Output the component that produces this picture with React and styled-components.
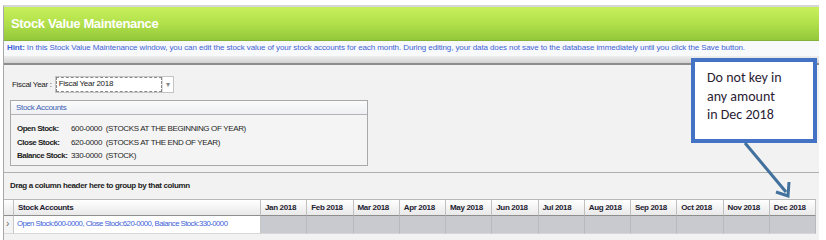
import React from 'react'
import styled, { createGlobalStyle } from 'styled-components'

const GlobalStyle = createGlobalStyle`
  body {
    margin: 0;
    background: #ffffff;
    font-family: 'Liberation Sans', Arial, sans-serif;
  }
`

const months = [
  'Jan', 'Feb', 'Mar', 'Apr', 'May', 'Jun',
  'Jul', 'Aug', 'Sep', 'Oct', 'Nov', 'Dec',
]

const Page = styled.div`
  position: relative;
  width: 826px;
  height: 240px;
  overflow: hidden;
  padding-top: 5px;
  box-sizing: border-box;
`

const Window = styled.div`
  margin-left: 3px;
  width: 815px;
  border-top: 2px solid #d6d6d6;
  border-left: 1px solid #a8a8a8;
  background: #f2f2f2;
  height: 240px;
  overflow: hidden;
`

const TitleBar = styled.div`
  height: 33px;
  display: flex;
  align-items: center;
  padding-left: 7px;
  background: linear-gradient(to bottom, #c8f05c 0%, #b4e24c 45%, #93c83a 100%);
  border-bottom: 1px solid #86b23a;
  color: #ffffff;
  font-size: 13px;
  font-weight: bold;
  letter-spacing: -0.35px;
`

const Hint = styled.div`
  height: 15px;
  line-height: 14px;
  padding-left: 3px;
  background: #f7f9fb;
  color: #3f63d6;
  font-size: 8px;
  letter-spacing: -0.1px;
  white-space: nowrap;
  b {
    font-weight: bold;
  }
`

const Strip = styled.div`
  height: 7px;
  background: linear-gradient(to bottom, #eeeeee, #d2d2d2);
  border-bottom: 2px solid #8c8c8c;
`

const Body = styled.div`
  padding: 10px 0 0 0;
`

const FiscalRow = styled.div`
  display: flex;
  align-items: center;
  padding-left: 8px;
  gap: 3px;
  font-size: 8px;
  letter-spacing: -0.3px;
  color: #222;
  height: 18px;
`

const Combo = styled.div`
  display: flex;
  width: 117px;
  height: 15px;
  border: 1px solid #c4c4c4;
  background: #fff;
`

const ComboText = styled.div`
  flex: 1;
  border: 1px dashed #888;
  padding-left: 2px;
  line-height: 12px;
`

const ComboButton = styled.div`
  width: 10px;
  display: flex;
  align-items: center;
  justify-content: center;
  color: #888;
  font-size: 8px;
  border-left: 1px solid #ddd;
`

const GroupBox = styled.div`
  margin: 7px 0 0 6px;
  width: 356px;
  height: 64px;
  border: 1px solid #a9a9a9;
  background: #f4f4f4;
`

const GroupHeader = styled.div`
  height: 13px;
  line-height: 13px;
  padding-left: 5px;
  font-size: 8px;
  letter-spacing: -0.3px;
  color: #3b5fb4;
  background: linear-gradient(to bottom, #fbfbfb, #eef0f3);
  border-bottom: 1px solid #b4b4b4;
`

const AccountList = styled.div`
  display: grid;
  grid-template-columns: 54px auto;
  row-gap: 1px;
  padding: 8px 0 0 6px;
  font-size: 8px;
  letter-spacing: -0.35px;
  line-height: 12.5px;
  color: #1e1e1e;
  white-space: nowrap;
`

const Label = styled.div`
  font-weight: bold;
  letter-spacing: -0.5px;
`

const Divider = styled.div`
  margin-top: 6px;
  height: 1px;
  background: #b0b0b0;
`

const GroupPanel = styled.div`
  height: 26px;
  line-height: 26px;
  padding-left: 6px;
  font-size: 8px;
  letter-spacing: -0.35px;
  font-weight: bold;
  color: #222;
`

const Grid = styled.div`
  display: grid;
  grid-template-columns: 10px 247px repeat(12, 46.25px);
`

const HeadCell = styled.div`
  height: 15px;
  line-height: 15px;
  padding-left: 4px;
  font-size: 8px;
  letter-spacing: -0.35px;
  font-weight: bold;
  color: #1e2230;
  background: linear-gradient(to bottom, #ffffff, #e9e9e9);
  border-top: 1px solid #b8b8b8;
  border-right: 1px solid #c0c0c0;
  border-bottom: 1px solid #8e8e8e;
  white-space: nowrap;
  overflow: hidden;
`

const Cell = styled.div`
  height: 17px;
  line-height: 16px;
  padding-left: 3px;
  font-size: 7.8px;
  letter-spacing: -0.55px;
  white-space: nowrap;
  overflow: hidden;
  color: #3d62d8;
  background: ${(p) => (p.filled ? '#c9cacf' : '#ffffff')};
  border-right: 1px solid ${(p) => (p.filled ? '#b9b9be' : '#c8c8c8')};
  border-bottom: 1px solid #d8d8d8;
`

const Indicator = styled(Cell)`
  padding-left: 2px;
  color: #666;
  background: #f4f4f4;
  font-size: 10px;
`

const Callout = styled.div`
  position: absolute;
  left: 691px;
  top: 58px;
  width: 106px;
  height: 70px;
  background: #ffffff;
  border: 4px solid #4472c4;
  padding: 7px 0 0 12px;
  box-sizing: content-box;
  font-family: Carlito, 'Liberation Sans', sans-serif;
  font-size: 14px;
  line-height: 18.5px;
  color: #2b1b33;
`

const Arrow = styled.svg`
  position: absolute;
  left: 0;
  top: 0;
  pointer-events: none;
`

const App = () => (
  <>
    <GlobalStyle />
    <Page>
      <Window>
        <TitleBar>Stock Value Maintenance</TitleBar>
        <Hint>
          <b>Hint:</b> In this Stock Value Maintenance window, you can edit the stock value of your stock
          accounts for each month. During editing, your data does not save to the database immediately
          until you click the Save button.
        </Hint>
        <Strip />
        <Body>
          <FiscalRow>
            <span>Fiscal Year :</span>
            <Combo>
              <ComboText>Fiscal Year 2018</ComboText>
              <ComboButton>▾</ComboButton>
            </Combo>
          </FiscalRow>
          <GroupBox>
            <GroupHeader>Stock Accounts</GroupHeader>
            <AccountList>
              <Label>Open Stock:</Label>
              <span>600-0000 &nbsp;(STOCKS AT THE BEGINNING OF YEAR)</span>
              <Label>Close Stock:</Label>
              <span>620-0000 &nbsp;(STOCKS AT THE END OF YEAR)</span>
              <Label>Balance Stock:</Label>
              <span>330-0000 &nbsp;(STOCK)</span>
            </AccountList>
          </GroupBox>
          <Divider />
          <GroupPanel>Drag a column header here to group by that column</GroupPanel>
          <Grid>
            <HeadCell />
            <HeadCell>Stock Accounts</HeadCell>
            {months.map((m) => (
              <HeadCell key={m}>{m} 2018</HeadCell>
            ))}
            <Indicator>›</Indicator>
            <Cell>Open Stock:600-0000, Close Stock:620-0000, Balance Stock:330-0000</Cell>
            {months.map((m) => (
              <Cell key={m} filled />
            ))}
          </Grid>
        </Body>
      </Window>
      <Callout>
        Do not key in
        <br />
        any amount
        <br />
        in Dec 2018
      </Callout>
      <Arrow width="826" height="240">
        <line x1="745" y1="143" x2="786" y2="192" stroke="#41719c" strokeWidth="3" />
        <polyline
          points="776,192 788,196 789,182"
          fill="none"
          stroke="#41719c"
          strokeWidth="3"
          strokeLinejoin="miter"
        />
      </Arrow>
    </Page>
  </>
)

export default App
